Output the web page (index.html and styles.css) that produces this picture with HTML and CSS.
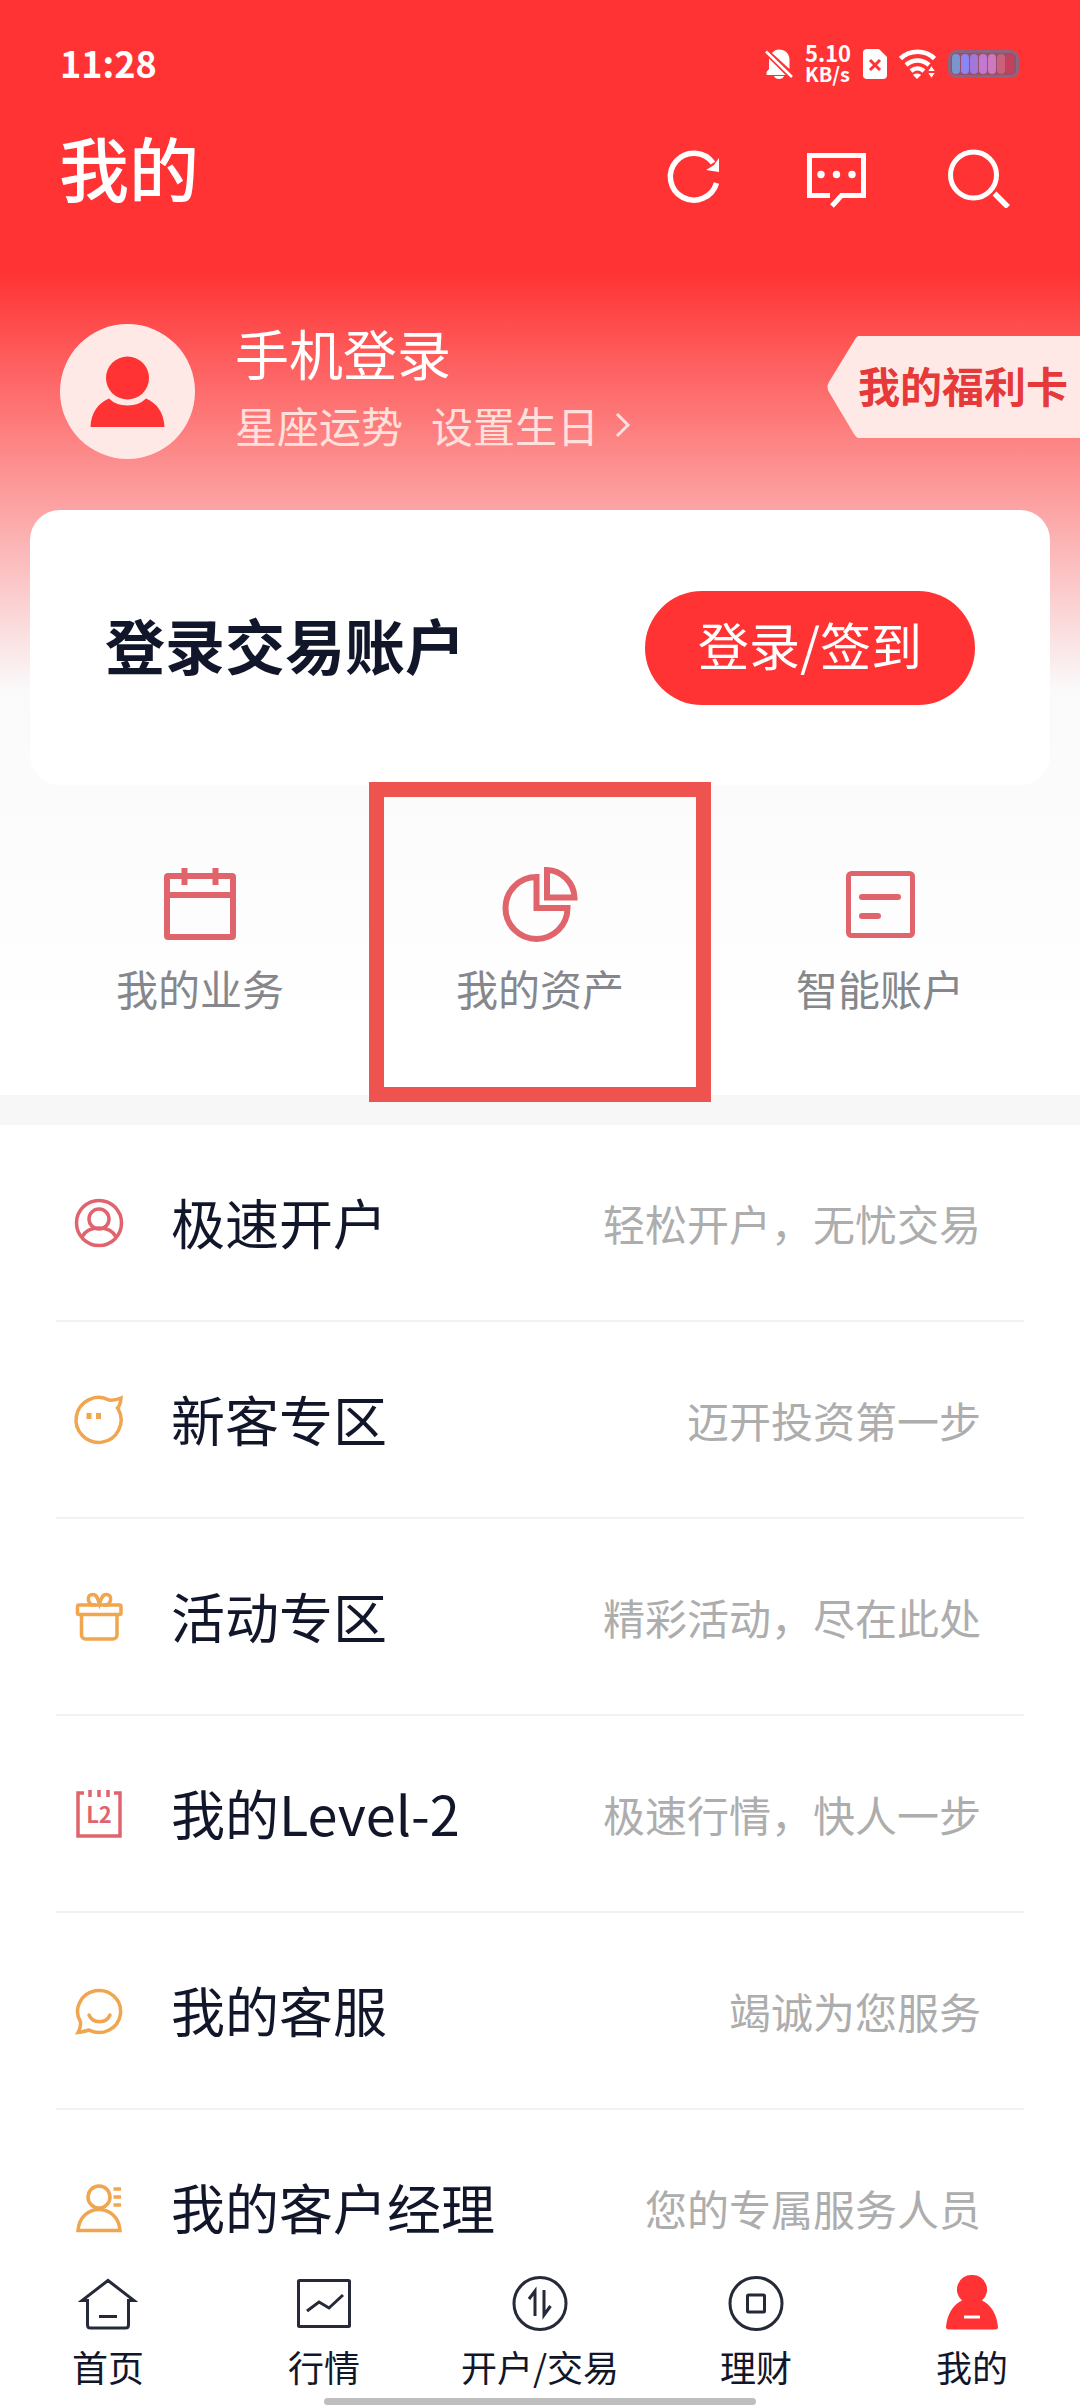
FILE: index.html
```html
<!DOCTYPE html>
<html lang="zh-CN">
<head>
<meta charset="utf-8">
<meta name="viewport" content="width=device-width, initial-scale=1">
<title>我的</title>
<link rel="stylesheet" href="styles.css">
</head>
<body>
<div class="app">
  <header class="top">
    <div class="status">
      <time class="clock">11:28</time>
      <div class="status-icons">
        <svg width="28" height="30" viewBox="0 0 28 30" aria-hidden="true"><path fill="#fff" d="M7 4C9 1.500 11.500 .5 14 .5c6 0 10.500 4 10.500 10V20ZM4 9.500 20.500 26H1.500v-3L4 20ZM9 27h10c-1 4-9 4-10 0Z"/><path d="M1 2.500 27 28" stroke="#fff" stroke-width="2.500"/></svg>
        <div class="speed"><span>5.10</span><span class="unit">KB/s</span></div>
        <svg width="24" height="30" viewBox="0 0 24 30" aria-hidden="true"><path fill="#fff" d="M4 0h12l8 8v18a4 4 0 0 1-4 4H4a4 4 0 0 1-4-4V4a4 4 0 0 1 4-4Z"/><path d="m7 11 10 10M17 11 7 21" stroke="#f33" stroke-width="3"/></svg>
        <svg width="37" height="30" viewBox="0 0 37 30" aria-hidden="true"><g fill="none" stroke="#fff" stroke-width="4.500"><path d="M1.500 9.500C11 .5 26 .5 35.500 9.500M7 16c7-6 16-6 23 0M12 22c4-3.500 9-3.500 13 0"/></g><path fill="#fff" d="M14 26c2-2 6-2 8 0l-4 4Z"/><path fill="#fff" stroke="#f33" d="m28.500 22.500 4-6 4 6ZM28.500 23.500l4 6 4-6Z"/></svg>
        <svg width="71" height="28" viewBox="0 0 71 28" aria-hidden="true"><rect x="1.500" y="1.500" width="68" height="25" rx="7" fill="#96506a" stroke="#8f6480" stroke-width="3"/><rect x="4" y="4" width="8" height="20" rx="4" fill="#7b96cc"/><rect x="13" y="4" width="8" height="20" rx="4" fill="#8d85f2"/><rect x="22" y="4" width="8" height="20" rx="4" fill="#a277da"/><rect x="31" y="4" width="8" height="20" rx="4" fill="#c379cf"/><rect x="40" y="4" width="8" height="20" rx="4" fill="#cd79c0"/><rect x="49" y="4" width="8" height="20" rx="4" fill="#c9617a"/><rect x="58" y="4" width="8" height="20" rx="4" fill="#c5405c"/></svg>
      </div>
    </div>
    <div class="titlebar">
      <h1 class="title">我的</h1>
      <div class="tools">
        <button class="tool" aria-label="刷新"><svg viewBox="0 0 64 64"><path d="M54.500 39A23.500 23.500 0 1 1 51 19" fill="none" stroke="#fff" stroke-width="5.500"/><path fill="#fff" d="M57 14v14l-13-2 8-5Z"/></svg></button>
        <button class="tool" aria-label="消息"><svg viewBox="0 0 64 64"><path d="M26 51.500H5.500v-40h54v40H37.500L28 62" fill="none" stroke="#fff" stroke-width="5"/><g fill="#fff"><circle cx="17" cy="30.500" r="3.700"/><circle cx="32.500" cy="30.500" r="3.700"/><circle cx="48" cy="30.500" r="3.700"/></g></svg></button>
        <button class="tool" aria-label="搜索"><svg viewBox="0 0 64 64"><circle cx="27.500" cy="31" r="23" fill="none" stroke="#fff" stroke-width="5"/><path d="m48.500 49.500 13.500 13.500" stroke="#fff" stroke-width="5.500"/></svg></button>
      </div>
    </div>
  </header>

  <main class="content">
    <section class="hero">
      <div class="profile">
        <svg class="avatar" viewBox="0 0 135 135" aria-hidden="true"><circle cx="67.500" cy="67.500" r="67.500" fill="#ffe9e6"/><g fill="#f33"><circle cx="67.500" cy="54" r="21.500"/><path d="M30.500 103C31 89 38 79 49 74.500Q56 81.500 67.500 81.500T86 74.500C97 79 104 89 104.500 103Z"/></g></svg>
        <div class="identity">
          <a class="login-name" href="#login">手机登录</a>
          <div class="fortune"><a href="#fortune">星座运势</a><a class="birthday" href="#birthday">设置生日<svg width="16" height="26" viewBox="0 0 16 26" aria-hidden="true"><path d="m2 2 11 11L2 24" fill="none" stroke="#ffe0dc" stroke-width="3"/></svg></a></div>
        </div>
        <a class="benefit" href="#benefit"><svg class="benefit-tip" width="31" height="102" viewBox="0 0 31 102" aria-hidden="true"><path fill="#ffe9e6" d="M31 0Q29 1 27 5L2 46Q-1 51 2 56L27 98Q29 101 31 102Z"/></svg><span class="benefit-label">我的福利卡</span></a>
      </div>

      <div class="card">
        <h2 class="card-title">登录交易账户</h2>
        <button class="signin">登录/签到</button>
      </div>

      <nav class="shortcuts" aria-label="快捷入口">
        <a class="shortcut" href="#business">
          <svg viewBox="0 0 76 76" aria-hidden="true"><g fill="none" stroke="#e0646c" stroke-width="6"><rect x="5" y="10" width="66" height="61" rx="1"/><path d="M5 29h66M22.500 2v17M53.500 2v17"/></g></svg>
          <span>我的业务</span>
        </a>
        <a class="shortcut marked" href="#assets">
          <svg viewBox="0 0 76 76" aria-hidden="true"><g fill="none" stroke="#e0646c" stroke-width="6"><path d="M34.500 11A31 31 0 1 0 65.500 42H34.500Z"/><path d="M45 4A28.500 28.500 0 0 1 72.500 31.500H45Z"/></g></svg>
          <span>我的资产</span>
        </a>
        <a class="shortcut" href="#smart">
          <svg viewBox="0 0 76 76" aria-hidden="true"><g fill="none" stroke="#e0646c" stroke-width="5"><rect x="6.500" y="7.500" width="64" height="62" rx="3"/><path d="M20 31h36M20 50h16" stroke-width="6" stroke-linecap="round"/></g></svg>
          <span>智能账户</span>
        </a>
      </nav>
    </section>

    <ul class="menu">
      <li><a class="row" href="#open">
        <svg viewBox="0 0 48 48" class="red" aria-hidden="true"><circle cx="24" cy="24" r="22.500"/><circle cx="24" cy="20" r="10"/><path d="M7 38c3-6 9-9 17-9s14 3 17 9"/></svg>
        <span class="label">极速开户</span><span class="hint">轻松开户，无忧交易</span></a></li>
      <li><a class="row" href="#new">
        <svg viewBox="0 0 48 48" class="orange" aria-hidden="true"><path d="M43.500 13.500A22.500 22.500 0 1 1 34 4q5 1 12-2-.5 7-3.500 10Z"/><path d="M14 17v6M23.500 17v6" stroke-width="5"/></svg>
        <span class="label">新客专区</span><span class="hint">迈开投资第一步</span></a></li>
      <li><a class="row" href="#events">
        <svg viewBox="0 0 48 48" class="orange" aria-hidden="true"><rect x="2.500" y="12" width="43.500" height="9.500" rx="1.500"/><path d="M6.500 21.500V42a4 4 0 0 0 4 4h27.500a4 4 0 0 0 4-4V21.500M21 12h-4C12 9 12 1 18 1.500c4 0 5 5 6.500 9.500C26 6.500 27 1.500 31 1.500c6-.5 6 7.500 1 10.500h-4"/></svg>
        <span class="label">活动专区</span><span class="hint">精彩活动，尽在此处</span></a></li>
      <li><a class="row" href="#level2">
        <svg viewBox="0 0 48 48" class="red" aria-hidden="true"><path d="M9 3H3v43h42V3h-6M15 0v7M24 0v7M33 0v7"/><text class="badge" x="24" y="33" text-anchor="middle">L2</text></svg>
        <span class="label">我的Level-2</span><span class="hint">极速行情，快人一步</span></a></li>
      <li><a class="row" href="#service">
        <svg viewBox="0 0 48 48" class="orange" aria-hidden="true"><path d="M5.500 35A21.500 21 0 1 1 14 43Q8 45 3 45.500 6 40 5.500 35Z"/><path d="M14 28c4 9 17 9 21 0" stroke-linecap="round"/></svg>
        <span class="label">我的客服</span><span class="hint">竭诚为您服务</span></a></li>
      <li><a class="row" href="#manager">
        <svg viewBox="0 0 48 48" class="orange" aria-hidden="true"><circle cx="24" cy="13" r="11"/><path d="M3 46.500c1-14 11-21 21-21s20 7 21 21ZM38.500 5H46M38.500 13H46M38.500 21H46"/></svg>
        <span class="label">我的客户经理</span><span class="hint">您的专属服务人员</span></a></li>
    </ul>
  </main>

  <footer class="bottom">
    <nav class="tabs" aria-label="主导航">
      <a class="tab" href="#home"><svg viewBox="0 0 60 60" aria-hidden="true"><path d="M30 6.500 4 26.500h5.500V51q0 3 3 3h35q3 0 3-3V26.500H56ZM21 42.500h18"/></svg><span>首页</span></a>
      <a class="tab" href="#market"><svg viewBox="0 0 60 60" aria-hidden="true"><rect x="4.500" y="6.500" width="51" height="46" rx="1"/><path d="m13 37 12-9 10 6 14-13"/></svg><span>行情</span></a>
      <a class="tab" href="#trade"><svg viewBox="0 0 60 60" aria-hidden="true"><circle cx="30" cy="29.500" r="26"/><path d="m19 25 6-8v25M34 16v25l6.500-9"/></svg><span>开户/交易</span></a>
      <a class="tab" href="#wealth"><svg viewBox="0 0 60 60" aria-hidden="true"><circle cx="30" cy="29.500" r="26"/><rect x="21.500" y="21" width="17" height="17" rx="1"/></svg><span>理财</span></a>
      <a class="tab" href="#me" aria-current="page"><svg viewBox="0 0 60 60" aria-hidden="true"><path class="solid" d="M30 1a14.500 14.500 0 0 1 10 25.500C50 31 55 42 56 53q0 2.500-3 2.500H7q-3 0-3-2.500C5 42 10 31 20 26.500A14.500 14.500 0 0 1 30 1Z"/><path class="dash" d="M22 43h16"/></svg><span>我的</span></a>
    </nav>
    <div class="homebar"></div>
  </footer>
</div>
</body>
</html>
```
FILE: styles.css
```css
* { box-sizing: border-box; }

body {
  margin: 0;
  font-family: "Noto Sans CJK SC", sans-serif;
  color: #12162a;
  background: #fff;
}

a { color: inherit; text-decoration: none; }
button { padding: 0; border: 0; font: inherit; cursor: pointer; }
h1, h2, ul { margin: 0; padding: 0; }
svg { display: block; flex: none; }

.app { display: flex; flex-direction: column; height: 100vh; }

/* status bar and title */
.top { background: #f33; color: #fff; }
.status {
  display: flex;
  align-items: center;
  justify-content: space-between;
  height: 128px;
  padding: 0 61px 0 60px;
}
.clock { padding-bottom: 4px; font-size: 36px; font-weight: 700; }
.status-icons { display: flex; align-items: center; gap: 12px; }
.speed {
  display: flex;
  flex-direction: column;
  padding-bottom: 2px;
  font-size: 22px;
  font-weight: 700;
  line-height: 21px;
}
.unit { font-size: 20px; }
.titlebar {
  display: flex;
  justify-content: space-between;
  height: 96px;
  padding: 0 70px 0 59px;
}
.title { font-size: 70px; font-weight: 500; line-height: 78px; }
.tools { display: flex; align-items: center; gap: 78px; }
.tool { width: 64px; height: 64px; background: none; }

.content {
  flex: 1;
  min-height: 0;
  overflow-y: auto;
  scrollbar-width: none;
}

/* hero */
.hero {
  padding-top: 100px;
  background: linear-gradient(#f33 48px, #fafafb 466px, #fff 820px);
}
.profile { display: flex; align-items: flex-start; padding-left: 60px; }
.avatar { width: 135px; height: 135px; }
.identity { flex: 1; padding-left: 40px; color: #fff; }
.login-name { display: block; font-size: 54px; line-height: 58px; }
.fortune {
  display: flex;
  gap: 28px;
  margin-top: 8px;
  font-size: 42px;
  line-height: 69px;
  color: #ffe0dc;
}
.birthday { display: flex; align-items: center; gap: 16px; }
.benefit { display: flex; margin-top: 12px; color: #e63939; }
.benefit-label {
  padding-right: 12px;
  padding-bottom: 4px;
  background: #ffe9e6;
  font-size: 42px;
  font-weight: 700;
  line-height: 98px;
}

.card {
  display: flex;
  align-items: center;
  justify-content: space-between;
  margin: 51px 30px 0;
  padding: 81px 75px 80px;
  border-radius: 30px;
  background: #fff;
}
.card-title { padding-bottom: 8px; font-size: 60px; font-weight: 700; line-height: 80px; }
.signin {
  width: 330px;
  height: 114px;
  padding-bottom: 8px;
  border-radius: 57px;
  background: #f33;
  color: #fff;
  font-size: 51px;
}

.shortcuts {
  display: grid;
  grid-template-columns: repeat(3, 1fr);
  padding: 0 30px;
}
.shortcut {
  position: relative;
  display: flex;
  flex-direction: column;
  align-items: center;
  gap: 16px;
  height: 310px;
  padding-top: 81px;
  font-size: 42px;
  line-height: 60px;
  color: #85878c;
}
.shortcut svg { width: 76px; height: 76px; }
.marked::after {
  content: "";
  position: absolute;
  inset: -3px -1px -7px;
  border: 15px solid #ef5350;
}

/* menu list */
.menu { border-top: 30px solid #f7f7f7; list-style: none; }
.menu li { padding: 0 56px; }
.row {
  display: flex;
  align-items: center;
  height: 197px;
  padding: 0 43px 0 19px;
  border-bottom: 2px solid #f2f2f2;
}
.row svg {
  width: 48px;
  height: 48px;
  fill: none;
  stroke: currentColor;
  stroke-width: 3.5;
  overflow: visible;
}
.row .badge { fill: currentColor; stroke: none; font-size: 22px; font-weight: 700; }
.red { color: #e0646e; }
.orange { color: #f0a54e; }
.label { flex: 1; padding: 0 0 2px 48px; font-size: 54px; line-height: 64px; }
.hint { font-size: 42px; line-height: 60px; color: #adadad; }

/* bottom tabs */
.bottom { padding: 24px 0 3px; background: #fff; }
.tabs { display: grid; grid-template-columns: repeat(5, 1fr); }
.tab {
  display: flex;
  flex-direction: column;
  align-items: center;
  gap: 8px;
  font-size: 36px;
  line-height: 48px;
}
.tab svg {
  width: 60px;
  height: 60px;
  fill: none;
  stroke: #262a38;
  stroke-width: 3;
}
.tab .solid { fill: #f33; stroke: none; }
.tab .dash { stroke: #fff; }
.homebar {
  width: 40%;
  height: 7px;
  margin: 8px auto 0;
  border-radius: 4px;
  background: #bebebe;
}
```
